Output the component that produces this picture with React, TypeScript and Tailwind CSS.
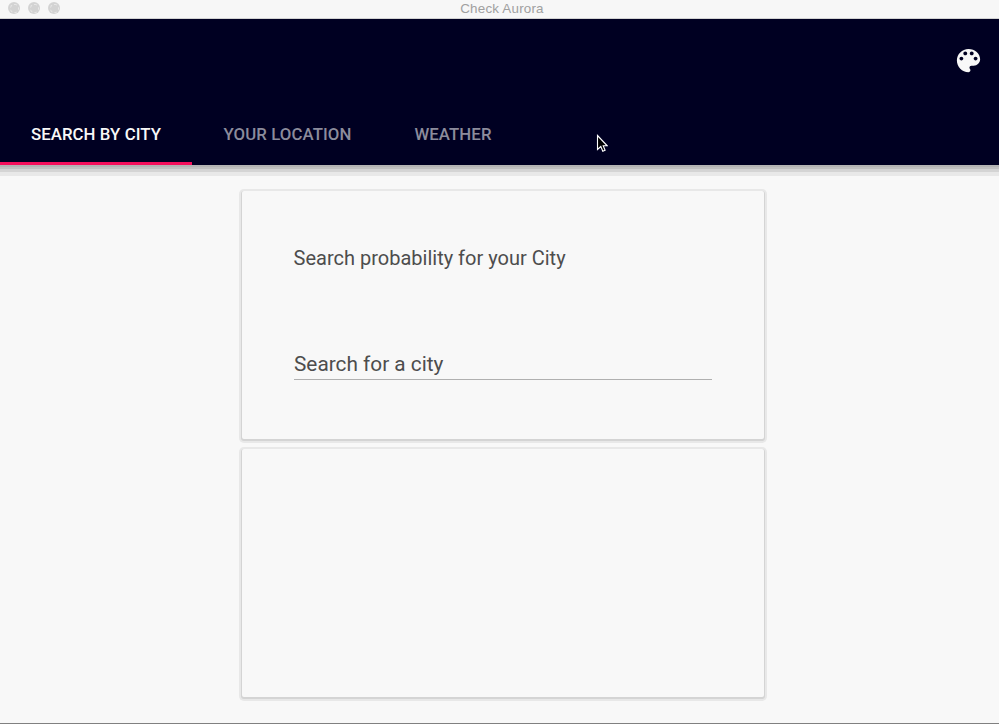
const tabs = [
  { label: 'SEARCH BY CITY', active: true, width: 'w-[192px]' },
  { label: 'YOUR LOCATION', active: false, width: 'w-[191px]' },
  { label: 'WEATHER', active: false, width: 'w-[140px]' },
];

const cardClass =
  'h-[248px] w-[522px] rounded-[2px] bg-[#f8f8f8] shadow-[0_1px_0_1px_#d4d4d4,0_1px_0_3px_#e8e8e8]';

function TitleBar() {
  return (
    <div className="relative flex h-[19px] items-center justify-center border-b border-[#d2d2d2] bg-[#f7f7f7] pb-px">
      <div className="absolute left-2 top-[2px] flex gap-2">
        {[0, 1, 2].map((dot) => (
          <span
            key={dot}
            className="flex size-3 items-center justify-center rounded-full bg-[#d3d3d3]"
          >
            <span className="size-[9px] rounded-full border border-dashed border-[#e8e8e8]" />
          </span>
        ))}
      </div>
      <span className="pl-[5px] font-['Liberation_Sans',sans-serif] text-[13.4px] leading-[18px] tracking-[0.2px] text-[#a0a0a0]">
        Check Aurora
      </span>
    </div>
  );
}

function Header() {
  return (
    <header className="relative flex h-[146px] flex-col justify-between bg-[#000022] shadow-[0_2px_0_#b4b4b4,0_4px_0_#c0c0c0,0_7px_0_#d4d4d4,0_11px_0_#e8e8e8]">
      <div className="flex justify-end pr-[15px] pt-[26px]">
        <svg viewBox="0 0 24 24" className="size-[31px]" fill="#f8f8f8">
          <path d="M12 3c-4.97 0-9 4.03-9 9s4.03 9 9 9c.83 0 1.5-.67 1.5-1.5 0-.39-.15-.74-.39-1.01-.23-.26-.38-.61-.38-.99 0-.83.67-1.5 1.5-1.5H16c2.76 0 5-2.24 5-5 0-4.42-4.03-8-9-8zm-5.5 9c-.83 0-1.5-.67-1.5-1.5S5.67 9 6.500 9 8 9.670 8 10.500 7.330 12 6.500 12zm3-4C8.670 8 8 7.330 8 6.500S8.670 5 9.500 5s1.500.670 1.500 1.500S10.330 8 9.500 8zm5 0c-.83 0-1.500-.670-1.500-1.500S13.670 5 14.500 5s1.500.670 1.500 1.500S15.330 8 14.500 8zm3 4c-.83 0-1.500-.670-1.500-1.500S16.670 9 17.500 9s1.500.670 1.500 1.500-.670 1.500-1.500 1.500z" />
        </svg>
      </div>
      <nav className="flex h-[62px] text-[16.8px] font-medium tracking-[0.08px]">
        {tabs.map((tab) => (
          <button
            key={tab.label}
            className={`${tab.width} flex items-center justify-center whitespace-nowrap border-b-[3px] pt-[4px] ${
              tab.active ? 'border-[#f50f5c] text-[#f8f8f8]' : 'border-transparent text-[#8c8c9c]'
            }`}
          >
            {tab.label}
          </button>
        ))}
      </nav>
      <svg viewBox="0 0 12 19" className="absolute left-[596px] top-[115px] h-[19px] w-[12px]">
        <path
          d="M1.500 1.500V15.500L4.800 12.500L6.800 17.300L9.100 16.300L7.200 11.800H11.200Z"
          fill="#000"
          stroke="#fff"
          strokeWidth="1.1"
        />
      </svg>
    </header>
  );
}

export default function App() {
  return (
    <div className="flex h-[724px] w-[999px] flex-col overflow-hidden border-b border-[#808080] bg-[#f8f8f8] font-['Roboto',sans-serif] text-[#4d4d4d]">
      <TitleBar />
      <Header />
      <main className="flex flex-col gap-[10px] pl-[242px] pt-[26px]">
        <section className={`${cardClass} px-[52px] pt-[52px]`}>
          <h1 className="-ml-[0.4px] text-[20px] leading-[30px]">Search probability for your City</h1>
          <div className="mt-[75px] h-[32px] w-[418px] border-b border-[#b0b0b0] text-[20.8px] leading-[32px]">
            Search for a city
          </div>
        </section>
        <section className={cardClass} />
      </main>
    </div>
  );
}
